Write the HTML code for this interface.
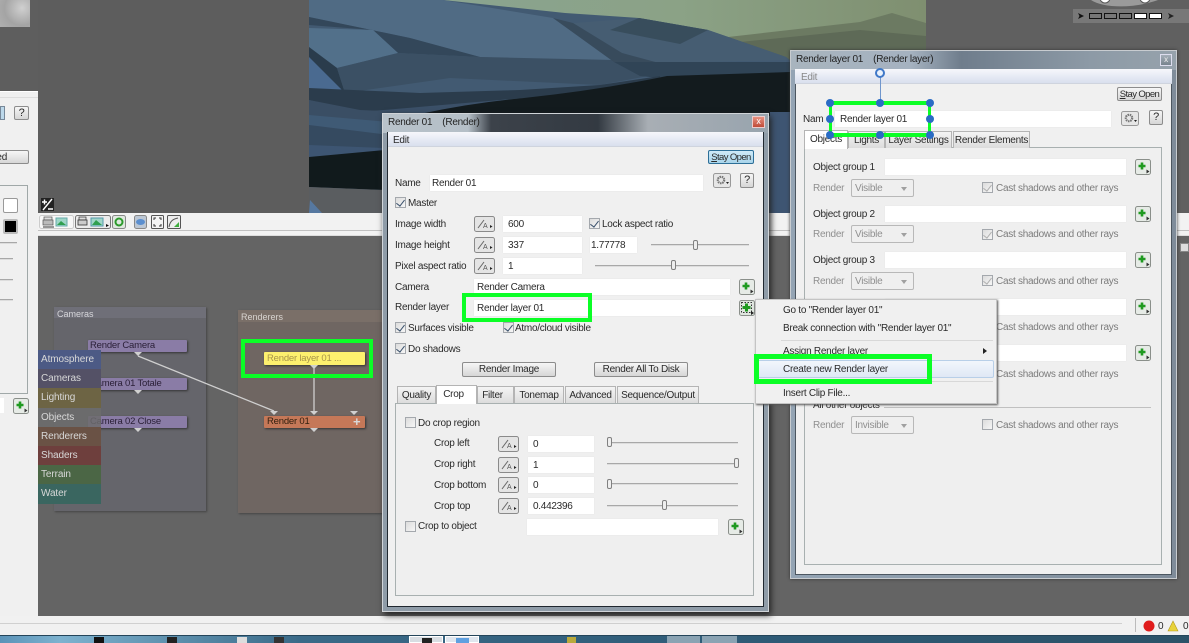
<!DOCTYPE html>
<html><head><meta charset="utf-8"><style>
html,body{margin:0;padding:0}
body{width:1189px;height:643px;overflow:hidden;position:relative;background:#5e5e5e;font:10px/12px "Liberation Sans",sans-serif;color:#2a2a2a;letter-spacing:-.27px}
div,svg{position:absolute;box-sizing:border-box}
#r{left:0;top:0;width:1189px;height:643px;filter:blur(.35px);overflow:hidden}
.t{white-space:nowrap;height:12px;margin-top:1px}
.g{color:#8f8f8f}
.i{background:#fff;height:16px;box-shadow:0 0 1px #ddd;padding:3px 5px 0;white-space:nowrap}
.b{background:linear-gradient(#f6f6f6,#d6d6d6);border:1px solid #8c8c8c;border-radius:2px;text-align:center;white-space:nowrap;line-height:13px}
.so{letter-spacing:-.6px;font-size:9.5px}
.c{width:11px;height:11px;border:1px solid #a4a8ad;background:linear-gradient(135deg,#dcdcdc,#f6f6f6)}
.c.k:after{content:"";position:absolute;left:2px;top:0;width:4px;height:7px;border:solid #39506c;border-width:0 1.5px 1.5px 0;transform:rotate(38deg)}
.c.d:after{border-color:#b0b0b0}
.tab{height:17px;background:linear-gradient(#f4f4f4,#dcdcdc);border:1px solid #b4b4b4;border-bottom:0;text-align:center;line-height:17px;white-space:nowrap}
.tab.a{background:#fff;height:19px}
.p{background:#efefef;border:1px solid #a8b0b0}
.sl{height:1px;background:#a8a8a8;box-shadow:0 1px #ddd}
.th{width:5px;height:10px;background:#eee;border:1px solid #808080;border-radius:2px}
.sel{height:18px;width:63px;border:1px solid #b8b8b8;border-radius:2px;background:#efefef;color:#8f8f8f;padding:3px 3px 0}
.sel:after{content:"";position:absolute;right:6px;top:7px;border:3px solid transparent;border-top:4px solid #a0a0a0}
.n{border-radius:1px;box-shadow:1px 1px 2px #333;padding:0 2px;white-space:nowrap;font-size:9.5px;line-height:12px;color:#2b2038;letter-spacing:-.2px}
.tb{width:63px;height:19.2px;padding:4px 3px 0;color:#d8d8d8;white-space:nowrap;letter-spacing:-.1px}
.gr{border:4px solid #0bff26}
.h{width:8px;height:8px;border-radius:50%;background:#2a6cc4}
.tri{width:0;height:0;border:4px solid transparent;border-top:4px solid #d0d0d0;border-bottom:0}
</style></head><body>
<svg width="0" height="0"><defs>
<symbol id="pl" viewBox="0 0 16 16"><rect x=".5" y=".5" width="15" height="15" rx="2" fill="#e6ebe6" stroke="#8a8f8a"/><path d="M7 3.500v7M3.500 7h7" stroke="#1f9a20" stroke-width="2.600"/><path d="M11.500 10.500l3 2-3 2z" fill="#333"/></symbol>
<symbol id="fn" viewBox="0 0 21 16"><rect x=".5" y=".5" width="20" height="15" rx="2" fill="#e4e4e4" stroke="#8a8a8a"/><path d="M4 12L10 4" stroke="#666"/><text x="9" y="12" font-size="7" fill="#555" font-family="Liberation Sans">A</text><path d="M16 9l2.500 1.500-2.500 1.500z" fill="#222"/></symbol>
<symbol id="ge" viewBox="0 0 18 15"><rect x=".5" y=".5" width="17" height="14" rx="2" fill="#e6e6e6" stroke="#999"/><circle cx="8" cy="7" r="3.200" fill="none" stroke="#777" stroke-width="2.200" stroke-dasharray="1.500 .7"/><path d="M13 9h3l-1.500 2z" fill="#222"/></symbol>
</defs></svg>
<div id="r">
<!-- top area -->
<div style="left:0;top:0;width:30px;height:27px;background:radial-gradient(circle at 22px 8px,#d0d0d0,#a4a4a4 60%,#b0b0b0)"></div>
<div style="left:38px;top:0;width:271px;height:213px;background:#5d5d5d"></div>
<svg style="left:309px;top:0" width="617" height="213" viewBox="309 0 617 213">
<defs><linearGradient id="sky" x1="0" y1="0" x2="1" y2="0"><stop offset="0" stop-color="#8aa491"/><stop offset=".5" stop-color="#8ba286"/><stop offset="1" stop-color="#7f8f70"/></linearGradient></defs>
<rect x="309" y="0" width="617" height="213" fill="#3b5068"/>
<rect x="430" y="0" width="496" height="60" fill="url(#sky)"/>
<path d="M728 37L860 22 892 13 926 23V80H728z" fill="#6c7a62"/>
<path d="M740 42L860 30 926 36V80H740z" fill="#5e6a57"/>
<path d="M309 0H443L565 13 639 18 708 30 786 57 800 70 790 100H309z" fill="#425a72"/>
<path d="M309 0H443L553 18 614 62 480 57 410 38 309 17z" fill="#506b84"/>
<path d="M309 17L410 38 480 57 398 53 373 30 309 25z" fill="#33475a"/>
<path d="M309 28L373 30 398 53 337 68 309 47z" fill="#52708a"/>
<path d="M309 47L337 68 345 93 309 60z" fill="#2a3c4c"/>
<path d="M309 57L345 93H309z" fill="#4a6a90"/>
<path d="M337 68L398 53 480 57 614 60 680 70 600 85 450 78 345 93z" fill="#3b5064"/>
<path d="M573 23L639 18 708 30 786 57 790 60 659 63 622 53z" fill="#465d72"/>
<path d="M553 18L573 23 622 53 659 63 614 62z" fill="#384b5c"/>
<path d="M639 18L708 30 680 44 610 30z" fill="#384d5c"/>
<path d="M614 62H790V75L700 82 640 76z" fill="#304456"/>
<path d="M309 88L420 93 520 90 600 85 660 76 660 88 500 100 360 112 309 100z" fill="#2b3c4c"/>
<path d="M309 100L360 110 430 113 382 125 309 115z" fill="#3a4e64"/>
<path d="M309 115L390 122V140L309 128z" fill="#3f5a75"/>
<path d="M309 125L390 135V150L309 148z" fill="#354a60"/>
<path d="M309 145L385 148V157L309 157z" fill="#3d5572"/>
<path d="M420 114Q470 103 524 98 600 90 667 76L790 72V116H420z" fill="#131b1e"/>
<path d="M309 157L385 150V190L309 187z" fill="#111a1c"/>
<path d="M309 187L385 190V213H309z" fill="#5a5d60"/>
<path d="M310 200L322 213H309z" fill="#5678a0"/>
<path d="M770 112H790V213H770z" fill="#3e5572"/>
</svg>
<div style="left:926px;top:0;width:263px;height:213px;background:#606060"></div>
<svg style="left:1073px;top:0" width="116" height="24"><path d="M18 0C30 8 60 9 85 0z" fill="#9a9a9a"/><circle cx="32" cy="-2" r="5" fill="#fff" stroke="#555"/><circle cx="72" cy="-2" r="5" fill="#fff" stroke="#555"/><rect y="9" width="116" height="14" fill="#787878"/><path d="M5 13l6 3-6 3 1.500-3z" fill="#111"/><path d="M95 13l6 3-6 3 1.500-3z" fill="#222"/><g stroke="#111"><rect x="16.500" y="13.500" width="12" height="5" fill="#777"/><rect x="31.500" y="13.500" width="12" height="5" fill="#777"/><rect x="46.500" y="13.500" width="12" height="5" fill="#777"/><rect x="61.500" y="13.500" width="12" height="5" fill="#fff"/><rect x="76.500" y="13.500" width="12" height="5" fill="#fff"/></g></svg>
<svg style="left:41px;top:198px" width="13" height="13"><rect width="13" height="13" fill="#222"/><path d="M1 4h5M3.500 1.500v5M7 11h5M2 12L11 1" stroke="#fff" stroke-width="1.400"/></svg>

<!-- toolbar -->
<div style="left:38px;top:213px;width:1151px;height:23px;background:#f2f2f2;border-bottom:1px solid #ddd"><div style="left:0;top:17px;width:100%;height:1px;background:#c0c0c0"></div></div>
<svg style="left:38px;top:213px" width="150" height="18">
<rect x="1.500" y="2.500" width="34" height="13" rx="2" fill="#f8f8f8" stroke="#ccc"/>
<rect x="6" y="4" width="8" height="3" fill="#ddd" stroke="#555" stroke-width=".7"/><rect x="5" y="7" width="10" height="5" fill="#bbb" stroke="#555" stroke-width=".7"/><path d="M5 14h11" stroke="#333"/>
<rect x="18" y="5" width="11" height="8" fill="#9fd6c8" stroke="#6aa"/><path d="M19 12l4-4 5 4z" fill="#2f9f50"/>
<rect x="37.500" y="2.500" width="35" height="13" rx="2" fill="#ececec" stroke="#777"/>
<rect x="41" y="4" width="7" height="3" fill="#ddd" stroke="#333" stroke-width=".7"/><rect x="40" y="7" width="9" height="5" fill="#ccc" stroke="#333" stroke-width=".8"/><rect x="53" y="5" width="12" height="8" fill="#9fd6c8" stroke="#59a"/><path d="M54 12l4-5 6 5z" fill="#2f9f50"/>
<path d="M68 11l3 1.500-3 1.500z" fill="#111"/>
<rect x="74.500" y="2.500" width="13" height="13" rx="2" fill="#dfe9df" stroke="#888"/><circle cx="81" cy="9" r="3.500" fill="none" stroke="#2c9a2c" stroke-width="2"/>
<rect x="96.500" y="2.500" width="12" height="13" rx="2" fill="#bcc7d4" stroke="#888"/><ellipse cx="102.500" cy="9" rx="4.500" ry="3" fill="#5b8fcf"/>
<rect x="113.500" y="2.500" width="12" height="13" rx="1" fill="#f5f5f5" stroke="#555"/><path d="M116 7V5h2M121 5h2v2M123 11v2h-2M118 13h-2v-2" fill="none" stroke="#333"/>
<rect x="129.500" y="2.500" width="13" height="13" rx="1" fill="#eee" stroke="#555"/><path d="M131 14C132 8 135 6 140 5" fill="none" stroke="#555"/><path d="M141 14h-5l5-5z" fill="#3fae3f"/>
</svg>

<!-- left panel -->
<div style="left:0;top:91px;width:38px;height:525px;background:#f0f0f0;border-top:1px solid #fff"><div style="left:0;top:5px;width:38px;height:1px;background:#ddd"></div></div>
<div style="left:0;top:106px;width:5px;height:14px;background:#bcd8ea;border:1px solid #789"></div>
<div class="b" style="left:14px;top:106px;width:15px;height:14px;font-size:11px">?</div>
<div class="b" style="left:-10px;top:150px;width:39px;height:14px;text-align:right;padding-right:21px">ed</div>
<div style="left:-5px;top:185px;width:33px;height:209px;border:1px solid #a0a8a8;background:#f0f0f0"></div>
<div style="left:3px;top:198px;width:15px;height:15px;background:#fff;border:1px solid #999;border-radius:2px"></div>
<div style="left:3px;top:219px;width:15px;height:15px;background:#000;border:2px solid #bbb;border-radius:2px"></div>
<div class="sl" style="left:0;top:242px;width:17px"></div><div class="sl" style="left:0;top:258px;width:13px"></div><div class="sl" style="left:0;top:279px;width:13px"></div><div class="sl" style="left:0;top:299px;width:13px"></div>
<div style="left:0;top:398px;width:4px;height:15px;background:#fff"></div>
<svg style="left:13px;top:398px" width="16" height="16"><use href="#pl"/></svg>

<!-- node graph -->
<div style="left:38px;top:236px;width:1151px;height:380px;background:#646464"></div>
<div style="left:1180px;top:243px;width:9px;height:9px;background:#ddd;border:1px solid #888"></div>
<div style="left:54px;top:307px;width:152px;height:204px;background:#65656b;box-shadow:1px 1px 2px #444"><div style="left:0;top:0;width:152px;height:11px;background:#6f6f78"></div><div class="t" style="left:3px;top:0;color:#d6d6da;font-size:9px;letter-spacing:0">Cameras</div></div>
<div style="left:238px;top:310px;width:160px;height:203px;background:#6f6662;box-shadow:1px 1px 2px #444"><div style="left:0;top:0;width:160px;height:12px;background:#7a6f68"></div><div class="t" style="left:3px;top:0;color:#d8d4d0;font-size:9px;letter-spacing:0">Renderers</div></div>
<div class="n" style="left:88px;top:340px;width:99px;height:12px;background:#8a7ca6">Render Camera</div>
<div class="tri" style="left:134px;top:352px"></div>
<div class="n" style="left:88px;top:378px;width:99px;height:12px;background:#8a7ca6;padding-left:2px">Camera 01 Totale</div>
<div class="tri" style="left:134px;top:390px"></div>
<div class="n" style="left:88px;top:416px;width:99px;height:12px;background:#8a7ca6;padding-left:2px">Camera 02 Close</div>
<div class="tri" style="left:134px;top:428px"></div>
<div class="n" style="left:264px;top:352px;width:101px;height:13px;background:#fdf06e;color:#a8954a;padding:1px 3px">Render layer 01 ...</div>
<div class="n" style="left:264px;top:416px;width:101px;height:12px;background:#c57858;color:#33200f;padding-left:3px">Render 01</div>
<div class="t" style="left:353px;top:415px;color:#d8d8d8;font-weight:bold;font-size:13px">+</div>
<div class="tri" style="left:310px;top:428px"></div>
<div class="tri" style="left:270px;top:411px"></div><div class="tri" style="left:310px;top:411px"></div><div class="tri" style="left:350px;top:411px"></div>
<div class="tri" style="left:310px;top:365px"></div>
<svg style="left:38px;top:236px" width="400" height="200"><path d="M100 120L236 175M276 130V175" stroke="#cfcfcf" stroke-width="1.300" fill="none"/></svg>
<div class="tb" style="left:38px;top:350px;background:#4c5a85">Atmosphere</div>
<div class="tb" style="left:38px;top:369.200px;background:#545166">Cameras</div>
<div class="tb" style="left:38px;top:388.400px;background:#6d6444">Lighting</div>
<div class="tb" style="left:38px;top:407.600px;background:rgba(108,108,108,.85)">Objects</div>
<div class="tb" style="left:38px;top:426.800px;background:#6a5245">Renderers</div>
<div class="tb" style="left:38px;top:446px;background:#6e3f3d">Shaders</div>
<div class="tb" style="left:38px;top:465.200px;background:#4b6645">Terrain</div>
<div class="tb" style="left:38px;top:484.400px;background:#3a6660">Water</div>
<div class="gr" style="left:241px;top:339px;width:132px;height:39px"></div>

<!-- status bar -->
<div style="left:0;top:616px;width:1189px;height:19px;background:#f1f1f1"><div style="left:0;top:7px;width:1122px;height:1px;background:#d0d0d0"></div><div style="left:1135px;top:2px;width:1px;height:14px;background:#bbb"></div></div>
<svg style="left:1143px;top:619px" width="46" height="14"><circle cx="6" cy="7" r="5.500" fill="#e01c1c"/><path d="M30 2l5 10H25z" fill="#e8d23a" stroke="#b59a20" stroke-width=".6"/></svg>
<div class="t" style="left:1158px;top:620px">0</div><div class="t" style="left:1183px;top:620px">0</div>
<div style="left:0;top:635px;width:1189px;height:8px;background:linear-gradient(90deg,#5b93b8 0,#7db2cf 60px,#3a6a88 300px,#2f5c78 700px,#2b5268 1189px);border-top:1px solid #24455a"></div>
<div style="left:409px;top:636px;width:34px;height:7px;background:#d8dde2;border:1px solid #fff"><div style="left:12px;top:1px;width:10px;height:5px;background:#222"></div></div>
<div style="left:445px;top:636px;width:34px;height:7px;background:#dfe6ee;border:1px solid #fff"><div style="left:10px;top:1px;width:13px;height:5px;background:#5fa0e0"></div></div>
<div style="left:667px;top:636px;width:33px;height:7px;background:#8aa3b3"></div>
<div style="left:702px;top:636px;width:35px;height:7px;background:#8aa3b3"></div>
<div style="left:94px;top:637px;width:10px;height:6px;background:#111"></div><div style="left:167px;top:637px;width:10px;height:6px;background:#222"></div><div style="left:237px;top:637px;width:10px;height:6px;background:#ddd"></div><div style="left:274px;top:637px;width:10px;height:6px;background:#333"></div><div style="left:567px;top:637px;width:9px;height:6px;background:#b9a93c"></div>

<!-- dialog 2 -->
<div style="left:790px;top:50px;width:387px;height:529px;border:1px solid #c8ccd0;background:linear-gradient(90deg,#94a4b4,#7f8c9a);box-shadow:0 0 3px #333">
 <div style="left:0;top:0;width:385px;height:19px;background:linear-gradient(90deg,#a8b4be 0,#a5b2c0 120px,#6f7d8c 170px,#8d9aa6 300px,#96a2ac 100%)"></div>
 <div style="left:4px;top:19px;width:377px;height:505px;background:#f0f0f0;border:1px solid #4c5660"></div>
</div>
<div class="t" style="left:796px;top:53px;color:#222">Render layer 01 &nbsp;&nbsp; (Render layer)</div>
<div style="left:1160px;top:54px;width:12px;height:12px;background:linear-gradient(#a4aeb8,#78848e);border:1px solid #dde;color:#eee;font-size:8px;line-height:9px;text-align:center">x</div>
<div style="left:795px;top:69px;width:377px;height:15px;background:linear-gradient(#f6f7fb,#d9dfee);border-bottom:1px solid #cfd4de"></div>
<div class="t g" style="left:801px;top:71px;color:#888">Edit</div>
<div class="b so" style="left:1117px;top:87px;width:45px;height:14px"><u>S</u>tay Open</div>
<div class="t" style="left:803px;top:113px">Nam</div>
<div class="i" style="left:835px;top:111px;width:276px">Render layer 01</div>
<svg style="left:1121px;top:111px" width="18" height="15"><use href="#ge"/></svg>
<div class="b" style="left:1149px;top:110px;width:14px;height:15px;font-size:11px">?</div>
<div class="p" style="left:804px;top:147px;width:358px;height:418px"></div>
<div class="tab a" style="left:804px;top:130px;width:44px">Objects</div>
<div class="tab" style="left:848px;top:131px;width:37px">Lights</div>
<div class="tab" style="left:885px;top:131px;width:67px">Layer Settings</div>
<div class="tab" style="left:953px;top:131px;width:77px">Render Elements</div>

<div class="t" style="left:813px;top:161px">Object group 1</div><div class="i" style="left:885px;top:159px;width:241px"></div><svg style="left:1135px;top:159px" width="16" height="16"><use href="#pl"/></svg>
<div class="t g" style="left:813px;top:182px">Render</div><div class="sel" style="left:851px;top:179px">Visible</div><div class="c k d" style="left:982px;top:182px"></div><div class="t g" style="left:996px;top:182px;color:#7c7c7c">Cast shadows and other rays</div>
<div class="t" style="left:813px;top:208px">Object group 2</div><div class="i" style="left:885px;top:206px;width:241px"></div><svg style="left:1135px;top:206px" width="16" height="16"><use href="#pl"/></svg>
<div class="t g" style="left:813px;top:228px">Render</div><div class="sel" style="left:851px;top:225px">Visible</div><div class="c k d" style="left:982px;top:229px"></div><div class="t g" style="left:996px;top:228px;color:#7c7c7c">Cast shadows and other rays</div>
<div class="t" style="left:813px;top:254px">Object group 3</div><div class="i" style="left:885px;top:252px;width:241px"></div><svg style="left:1135px;top:252px" width="16" height="16"><use href="#pl"/></svg>
<div class="t g" style="left:813px;top:275px">Render</div><div class="sel" style="left:851px;top:272px">Visible</div><div class="c k d" style="left:982px;top:275px"></div><div class="t g" style="left:996px;top:275px;color:#7c7c7c">Cast shadows and other rays</div>
<div class="i" style="left:885px;top:299px;width:241px"></div><svg style="left:1135px;top:299px" width="16" height="16"><use href="#pl"/></svg>
<div class="t g" style="left:996px;top:321px;color:#7c7c7c">Cast shadows and other rays</div>
<div class="i" style="left:885px;top:345px;width:241px"></div><svg style="left:1135px;top:345px" width="16" height="16"><use href="#pl"/></svg>
<div class="t g" style="left:996px;top:368px;color:#7c7c7c">Cast shadows and other rays</div>
<div class="t" style="left:813px;top:399px">All other objects</div><div style="left:884px;top:407px;width:267px;height:1px;background:#c0c0c0"></div>
<div class="t g" style="left:813px;top:419px">Render</div><div class="sel" style="left:851px;top:416px">Invisible</div><div class="c" style="left:982px;top:419px"></div><div class="t g" style="left:996px;top:419px;color:#7c7c7c">Cast shadows and other rays</div>

<!-- selection overlay -->
<div style="left:829px;top:101px;width:102px;height:36px;border:solid #0bff26;border-width:4px 3px"></div>
<div style="left:880px;top:76px;width:1px;height:28px;background:#7096cc"></div>
<div style="left:875px;top:68px;width:10px;height:10px;border-radius:50%;background:#eaf2fc;border:2px solid #3f78c8"></div>
<div class="h" style="left:826px;top:99px"></div><div class="h" style="left:876px;top:99px"></div><div class="h" style="left:926px;top:99px"></div>
<div class="h" style="left:826px;top:115px"></div><div class="h" style="left:926px;top:115px"></div>
<div class="h" style="left:826px;top:131px"></div><div class="h" style="left:876px;top:131px"></div><div class="h" style="left:926px;top:131px"></div>

<!-- dialog 1 -->
<div style="left:382px;top:113px;width:387px;height:499px;border:1px solid #d0d4d8;background:#8f9ca8;box-shadow:2px 3px 6px #222">
 <div style="left:0;top:0;width:385px;height:19px;background:linear-gradient(90deg,#b8c2ca 0,#b5bfc7 85px,#3c424a 108px,#333a42 215px,#a8aeb4 265px,#98a4ae 100%)"></div>
 <div style="left:4px;top:18px;width:377px;height:475px;background:#f0f0f0;border:1px solid #202830"></div>
</div>
<div class="t" style="left:388px;top:116px;color:#222">Render 01 &nbsp;&nbsp; (Render)</div>
<div style="left:752px;top:116px;width:13px;height:12px;background:linear-gradient(#e89080,#c04a38);border:1px solid #ecc;color:#fff;font-size:9px;line-height:9px;text-align:center">x</div>
<div style="left:388px;top:132px;width:375px;height:15px;background:linear-gradient(#f6f7fb,#d9dfee);border-bottom:1px solid #cfd4de"></div>
<div class="t" style="left:393px;top:134px">Edit</div>
<div class="b so" style="left:708px;top:150px;width:46px;height:14px;background:linear-gradient(#cfeaf8,#a8d4ea);border-color:#2d6f98"><u>S</u>tay Open</div>
<div class="t" style="left:395px;top:177px">Name</div>
<div class="i" style="left:430px;top:175px;width:273px;padding-left:2px">Render 01</div>
<svg style="left:713px;top:173px" width="18" height="15"><use href="#ge"/></svg>
<div class="b" style="left:740px;top:173px;width:14px;height:15px;font-size:11px">?</div>
<div class="c k" style="left:395px;top:197px"></div><div class="t" style="left:408px;top:197px">Master</div>

<div class="t" style="left:395px;top:218px">Image width</div>
<svg style="left:474px;top:216px" width="21" height="16"><use href="#fn"/></svg>
<div class="i" style="left:503px;top:216px;width:79px">600</div>
<div class="c k" style="left:589px;top:218px"></div><div class="t" style="left:602px;top:218px">Lock aspect ratio</div>

<div class="t" style="left:395px;top:239px">Image height</div>
<svg style="left:474px;top:237px" width="21" height="16"><use href="#fn"/></svg>
<div class="i" style="left:503px;top:237px;width:79px">337</div>
<div class="i" style="left:590px;top:237px;width:47px;padding-left:1px">1.77778</div>
<div class="sl" style="left:651px;top:244px;width:98px"></div><div class="th" style="left:693px;top:240px"></div>

<div class="t" style="left:395px;top:260px">Pixel aspect ratio</div>
<svg style="left:474px;top:258px" width="21" height="16"><use href="#fn"/></svg>
<div class="i" style="left:503px;top:258px;width:79px">1</div>
<div class="sl" style="left:595px;top:265px;width:154px"></div><div class="th" style="left:671px;top:260px"></div>

<div class="t" style="left:395px;top:281px">Camera</div>
<div class="i" style="left:474px;top:279px;width:256px;padding-left:3px">Render Camera</div>
<svg style="left:739px;top:279px" width="16" height="16"><use href="#pl"/></svg>

<div class="t" style="left:395px;top:301px">Render layer</div>
<div class="i" style="left:474px;top:300px;width:256px;padding-left:3px">Render layer 01</div>
<svg style="left:739px;top:300px" width="16" height="16"><rect x=".5" y=".5" width="15" height="15" rx="2" fill="#dfe6df" stroke="#8a8f8a"/><rect x="2.500" y="2.500" width="10" height="10" fill="none" stroke="#333" stroke-dasharray="1.500 1.500"/><path d="M7.500 3.500v8M3.500 7.500h8" stroke="#1f9a20" stroke-width="3"/><path d="M12 11l3 2-3 2z" fill="#222"/></svg>
<div class="gr" style="left:462px;top:293px;width:130px;height:29px"></div>

<div class="c k" style="left:395px;top:322px"></div><div class="t" style="left:408px;top:322px">Surfaces visible</div>
<div class="c k" style="left:503px;top:322px"></div><div class="t" style="left:515px;top:322px">Atmo/cloud visible</div>
<div class="c k" style="left:395px;top:343px"></div><div class="t" style="left:408px;top:343px">Do shadows</div>
<div class="b" style="left:462px;top:362px;width:94px;height:15px">Render Image</div>
<div class="b" style="left:594px;top:362px;width:94px;height:15px">Render All To Disk</div>

<div class="p" style="left:395px;top:403px;width:359px;height:193px"></div>
<div class="tab" style="left:397px;top:386px;width:39px">Quality</div>
<div class="tab a" style="left:436px;top:385px;width:41px;padding-right:6px">Crop</div>
<div class="tab" style="left:477px;top:386px;width:37px;padding-right:6px">Filter</div>
<div class="tab" style="left:514px;top:386px;width:50px">Tonemap</div>
<div class="tab" style="left:565px;top:386px;width:51px">Advanced</div>
<div class="tab" style="left:617px;top:386px;width:82px">Sequence/Output</div>

<div class="c" style="left:405px;top:417px"></div><div class="t" style="left:418px;top:417px">Do crop region</div>
<div class="t" style="left:434px;top:437px">Crop left</div><svg style="left:498px;top:436px" width="21" height="16"><use href="#fn"/></svg><div class="i" style="left:528px;top:436px;width:66px">0</div><div class="sl" style="left:607px;top:442px;width:131px"></div><div class="th" style="left:607px;top:437px"></div>
<div class="t" style="left:434px;top:458px">Crop right</div><svg style="left:498px;top:457px" width="21" height="16"><use href="#fn"/></svg><div class="i" style="left:528px;top:457px;width:66px">1</div><div class="sl" style="left:607px;top:463px;width:131px"></div><div class="th" style="left:734px;top:458px"></div>
<div class="t" style="left:434px;top:479px">Crop bottom</div><svg style="left:498px;top:477px" width="21" height="16"><use href="#fn"/></svg><div class="i" style="left:528px;top:477px;width:66px">0</div><div class="sl" style="left:607px;top:483px;width:131px"></div><div class="th" style="left:607px;top:479px"></div>
<div class="t" style="left:434px;top:500px">Crop top</div><svg style="left:498px;top:498px" width="21" height="16"><use href="#fn"/></svg><div class="i" style="left:528px;top:498px;width:66px">0.442396</div><div class="sl" style="left:607px;top:505px;width:131px"></div><div class="th" style="left:662px;top:500px"></div>
<div class="c" style="left:405px;top:521px"></div><div class="t" style="left:418px;top:520px">Crop to object</div>
<div class="i" style="left:527px;top:519px;width:191px"></div><svg style="left:728px;top:519px" width="16" height="16"><use href="#pl"/></svg>

<!-- context menu -->
<div style="left:755px;top:299px;width:242px;height:105px;background:#f0f0f0;border:1px solid #c4c4c4;box-shadow:1px 1px 2px #555"></div>
<div class="t" style="left:783px;top:304px">Go to "Render layer 01"</div>
<div class="t" style="left:783px;top:322px">Break connection with "Render layer 01"</div>
<div style="left:781px;top:340px;width:212px;height:1px;background:#d8d8d8"></div>
<div class="t" style="left:783px;top:345px">Assign Render layer</div>
<div style="left:983px;top:348px;border:3px solid transparent;border-left:4px solid #222;border-right:0"></div>
<div style="left:757px;top:360px;width:237px;height:18px;background:linear-gradient(#f2f6fc,#dfe8f5);border:1px solid #b8cfe8;border-radius:2px"></div>
<div class="t" style="left:783px;top:363px">Create new Render layer</div>
<div style="left:781px;top:381px;width:212px;height:1px;background:#d8d8d8"></div>
<div class="t" style="left:783px;top:387px">Insert Clip File...</div>
<div class="gr" style="left:754px;top:354px;width:178px;height:30px;border-width:5px"></div>
</div>
</body></html>
